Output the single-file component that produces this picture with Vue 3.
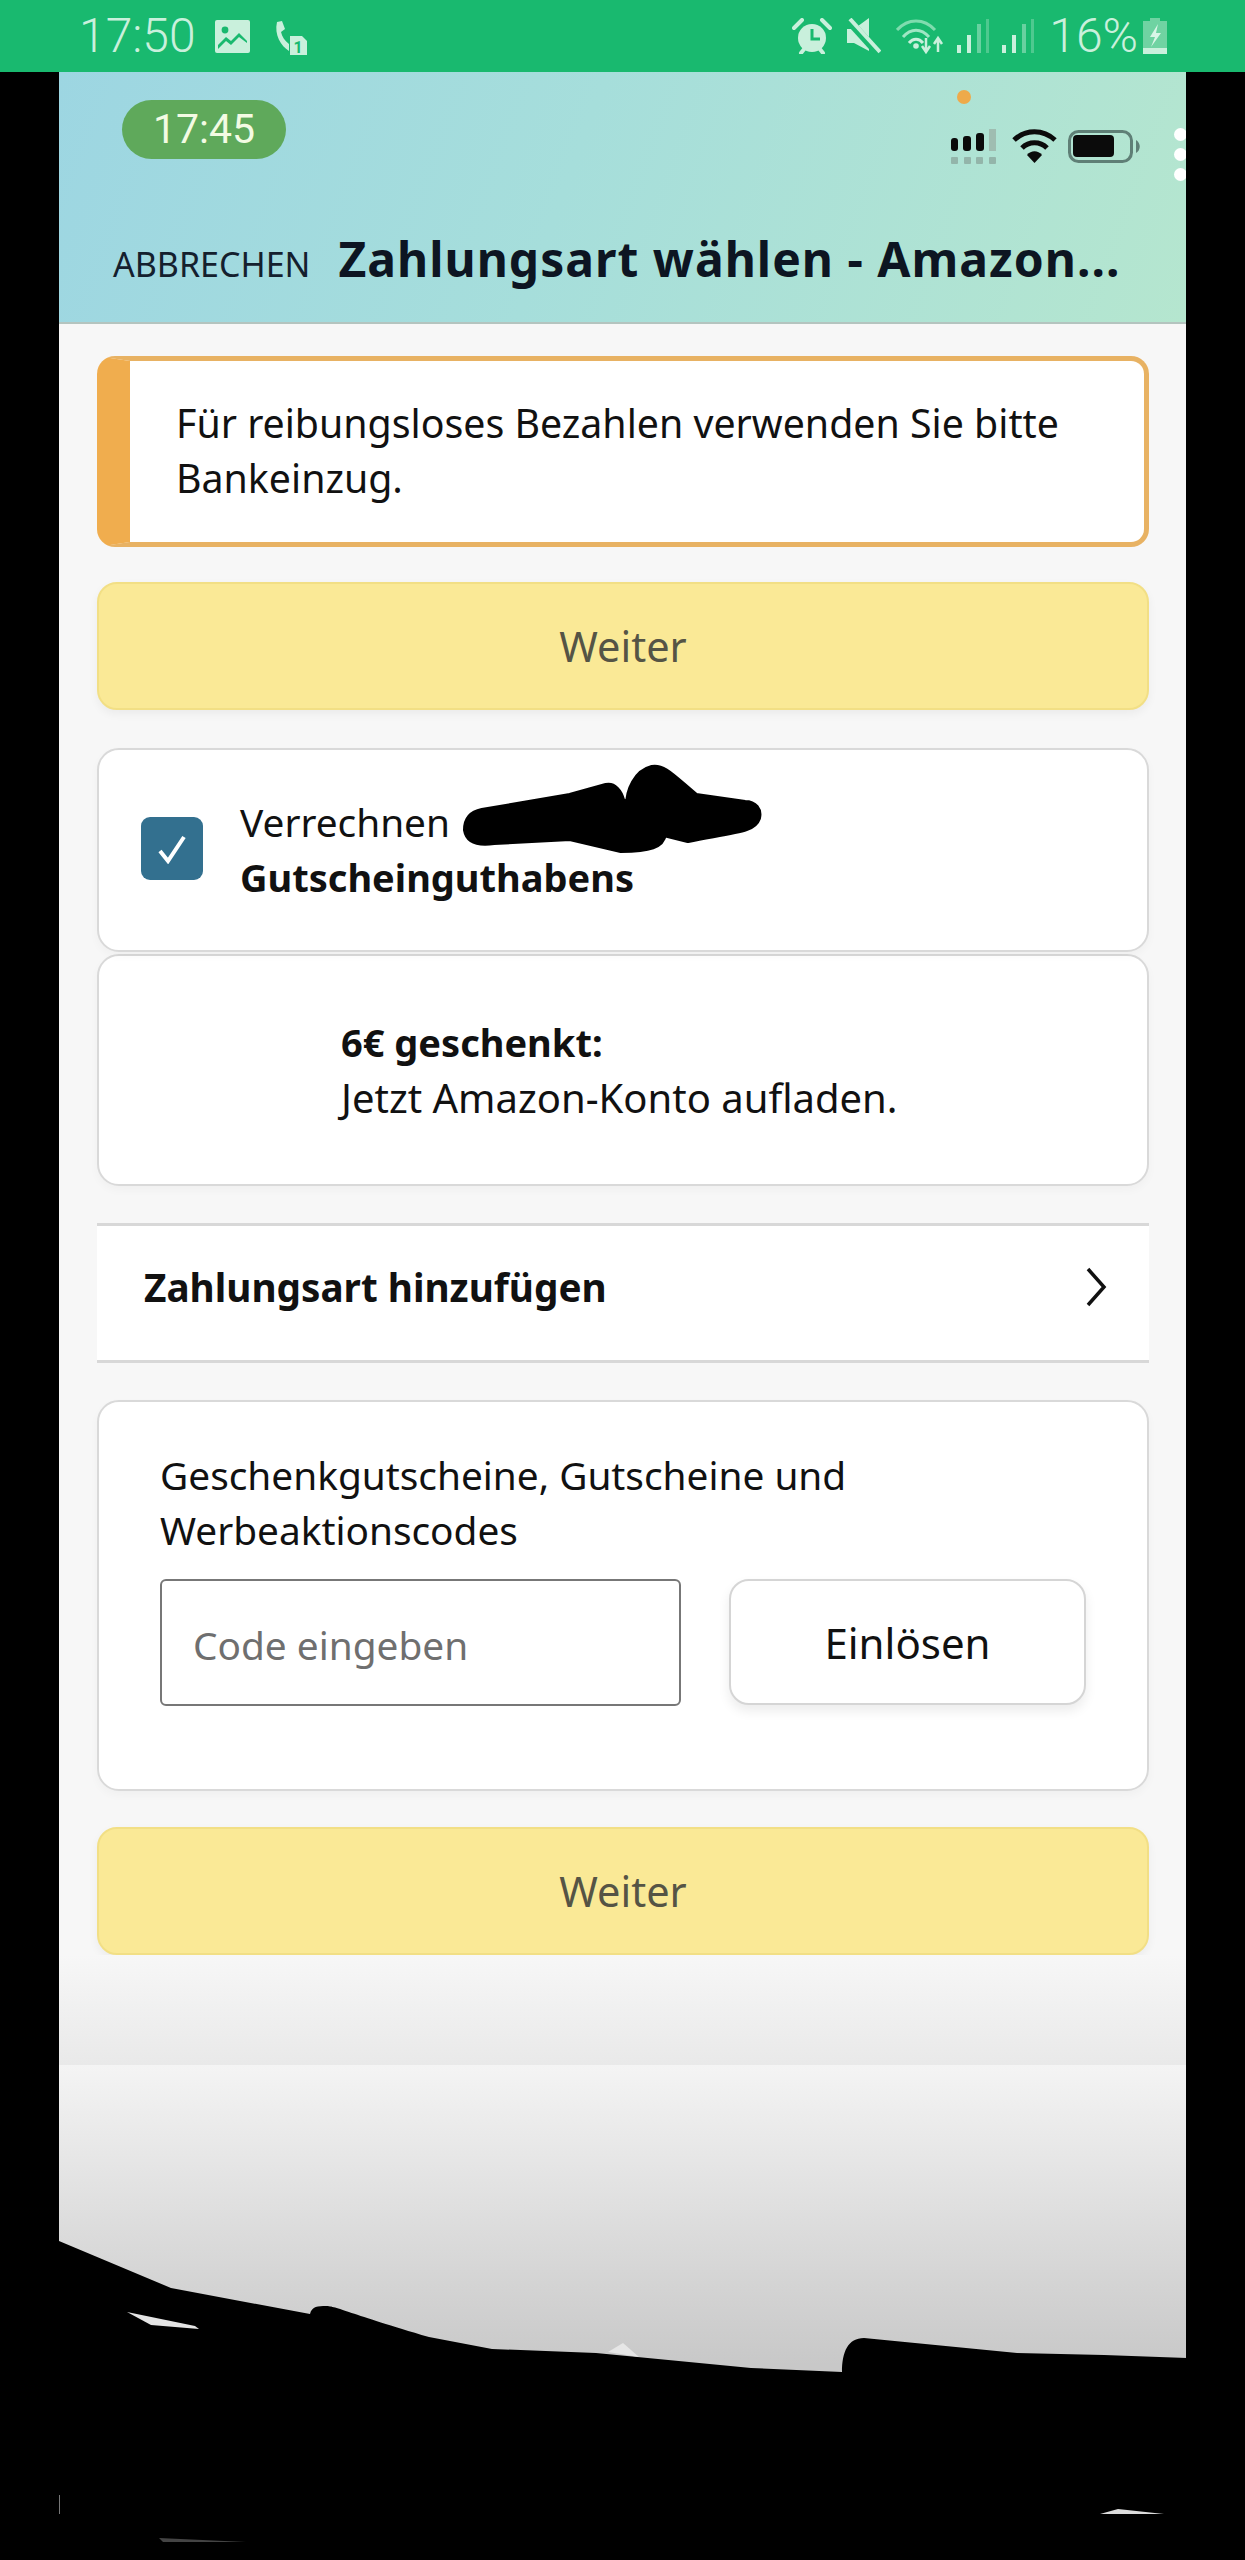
<script setup>
const signalBars = [
  { x: 0, y: 26, h: 8, o: 1 },
  { x: 10, y: 16, h: 18, o: 1 },
  { x: 20, y: 5, h: 29, o: 0.45 },
  { x: 29, y: 0, h: 34, o: 0.3 }
]
</script>

<template>
  <div class="screen">
    <!-- android status bar -->
    <div class="statusbar">
      <div class="statusbar-left">
        <span class="clock">17:50</span>
        <svg class="ic-image" width="35" height="33" viewBox="0 0 35 33">
          <rect width="35" height="33" rx="2" fill="#c9f0dc" />
          <circle cx="10" cy="10" r="3.4" fill="#19b96f" />
          <path d="M3 25 L11 17 L16 21 L24 13 L32 21 L32 23 L24 17 L16 25 L11 21 L3 29 Z" fill="#19b96f" />
        </svg>
        <svg class="ic-call" width="36" height="38" viewBox="0 0 36 38">
          <path d="M5 1 L10 0 L13 8 L9 11 C10 16 13 20 17 23 L17 30 C9 25 2 14 5 1 Z" fill="#c9f0dc" />
          <path d="M18 15 L30 15 L35 20 L35 34 L18 34 Z" fill="#c9f0dc" />
          <text x="26" y="32" class="sim-no">1</text>
        </svg>
      </div>
      <div class="statusbar-right">
        <svg width="40" height="36" viewBox="0 0 40 36">
          <circle cx="20" cy="20" r="14" fill="#c9f0dc" />
          <path d="M20 11 V21 H28" fill="none" stroke="#19b96f" stroke-width="3" />
          <path d="M2 10 L10 2 M38 10 L30 2" stroke="#c9f0dc" stroke-width="4" stroke-linecap="round" />
          <path d="M9 35 L13 30 M31 35 L27 30" stroke="#c9f0dc" stroke-width="4" stroke-linecap="round" />
        </svg>
        <svg class="ic-mute" width="34" height="36" viewBox="0 0 34 36">
          <path d="M0 11 H7 L22 0 V33 L7 25 H0 Z" fill="#c9f0dc" />
          <path d="M1 2 L31 35" stroke="#19b96f" stroke-width="8" />
          <path d="M3 1 L33 34" stroke="#c9f0dc" stroke-width="4" />
        </svg>
        <svg class="ic-wifi" width="48" height="36" viewBox="0 0 48 36">
          <path d="M1 12 C12 0 28 0 39 12" fill="none" stroke="#7fdcae" stroke-width="3" />
          <path d="M7 19 C15 10 25 10 33 19" fill="none" stroke="#9fe6c3" stroke-width="3" />
          <path d="M13 25 C17 20 23 20 27 25" fill="none" stroke="#c9f0dc" stroke-width="3" />
          <circle cx="20" cy="28" r="2.8" fill="#c9f0dc" />
          <path d="M30 20 V33 M26 28 L30 34 L34 28" fill="none" stroke="#c9f0dc" stroke-width="2.5" />
          <path d="M42 34 V22 M38 26 L42 20 L46 26" fill="none" stroke="#c9f0dc" stroke-width="2.5" />
        </svg>
        <svg v-for="n in 2" :key="n" class="ic-signal" width="32" height="34" viewBox="0 0 32 34">
          <rect v-for="b in signalBars" :key="b.x" :x="b.x" :y="b.y" width="4" :height="b.h" fill="#c9f0dc" :opacity="b.o" />
        </svg>
        <span class="percent">16%</span>
        <svg class="ic-batt" width="24" height="36" viewBox="0 0 24 36">
          <path d="M7 0 H17 V3 H24 V36 H0 V3 H7 Z" fill="#6fd3a2" />
          <rect y="30" width="24" height="6" fill="#c9f0dc" />
          <path d="M15 6 L7 19 H12 L8 29 L18 15 H13 Z" fill="#d9f6e7" />
        </svg>
      </div>
    </div>

    <div class="frame">
      <header class="head">
        <div class="head-top">
          <span class="pill">17:45</span>
          <div class="ios-status">
            <span class="cam-dot"></span>
            <svg width="192" height="36" viewBox="0 0 192 36">
              <rect x="0" y="9" width="7" height="13" rx="3" fill="#0b0b0b" />
              <rect x="12" y="7" width="8" height="15" rx="3" fill="#0b0b0b" />
              <rect x="25" y="4" width="8" height="18" rx="3" fill="#0b0b0b" />
              <rect x="38" y="0" width="7" height="22" fill="#9fbdb1" />
              <rect x="0" y="28" width="7" height="7" rx="1" fill="#93b5aa" />
              <rect x="13" y="28" width="7" height="7" rx="1" fill="#93b5aa" />
              <rect x="25" y="28" width="7" height="7" rx="1" fill="#93b5aa" />
              <rect x="38" y="28" width="7" height="7" rx="1" fill="#93b5aa" />
              <path d="M63 11 C75 0 92 0 104 11" fill="none" stroke="#0b0b0b" stroke-width="5" />
              <path d="M71 19 C78 12 89 12 96 19" fill="none" stroke="#0b0b0b" stroke-width="5" />
              <path d="M76 26 C80 21 87 21 91 26 L83.5 34 Z" fill="#0b0b0b" />
              <rect x="118.5" y="2.5" width="62" height="30" rx="9" fill="none" stroke="#5f7f76" stroke-width="3" />
              <rect x="122" y="6" width="41" height="22" rx="4" fill="#0b0b0b" />
              <path d="M185 11 C190 14 190 21 185 24 Z" fill="#5f7f76" />
            </svg>
          </div>
          <div class="menu-dots"><i></i><i></i><i></i></div>
        </div>
        <div class="head-title">
          <span class="cancel">ABBRECHEN</span>
          <span class="title">Zahlungsart wählen - Amazon...</span>
        </div>
      </header>

      <main class="content">
        <div class="alert">Für reibungsloses Bezahlen verwenden Sie bitte Bankeinzug.</div>

        <button class="btn-next">Weiter</button>

        <div class="card card-balance">
          <span class="check">
            <svg width="30" height="30" viewBox="0 0 30 30">
              <path d="M3 17 L11 27 L27 3" fill="none" stroke="#fff" stroke-width="4" />
            </svg>
          </span>
          <div>
            <div>Verrechnen</div>
            <div class="strong">Gutscheinguthabens</div>
          </div>
          <!-- geschwaerzt -->
          <svg class="scribble" viewBox="97 748 1052 204">
            <path d="M466 830 C466 818 472 813 482 811 L570 796 L606 786 C614 784 620 792 622 800 L628 806 C628 790 636 772 652 768 C664 766 672 776 696 796 L745 803 C755 803 760 810 758 818 C754 830 740 830 688 840 L664 834 C662 846 650 850 621 850 L570 838 L494 842 C480 844 468 842 466 830 Z" fill="#000" stroke="#000" stroke-width="6" stroke-linejoin="round" />
          </svg>
        </div>

        <div class="card card-promo">
          <div class="strong">6€ geschenkt:</div>
          <div class="promo-text">Jetzt Amazon-Konto aufladen.</div>
        </div>

        <div class="add-row">
          <span class="strong">Zahlungsart hinzufügen</span>
          <svg width="22" height="40" viewBox="0 0 22 40">
            <path d="M3 2 L19 20 L3 38" fill="none" stroke="#111" stroke-width="3.5" />
          </svg>
        </div>

        <div class="card card-code">
          <div>Geschenkgutscheine, Gutscheine und Werbeaktionscodes</div>
          <div class="code-form">
            <input class="code-input" placeholder="Code eingeben" />
            <button class="btn-redeem">Einlösen</button>
          </div>
        </div>

        <button class="btn-next btn-last">Weiter</button>
      </main>

      <div class="fade"></div>
      <div class="tail"></div>
    </div>

    <!-- schwarz uebermalter unterer Rand -->
    <svg class="mask" viewBox="0 2200 1245 360">
      <path d="M59 2241 L171 2288 L310 2314 C312 2306 318 2306 326 2306 C336 2306 350 2314 429 2337 L492 2349 L596 2353 L751 2368 L842 2372 C842 2352 848 2338 864 2338 L1017 2353 L1104 2355 L1187 2358 L1187 2560 L59 2560 Z" fill="#000" />
      <path d="M608 2352 L623 2343 L639 2357 Z" fill="#e6e6e6" />
      <path d="M127 2312 L151 2325 L199 2329 L195 2326 Z" fill="#e4e4e4" />
      <path d="M1100 2514 L1118 2509 L1164 2514 Z" fill="#dcdcdc" />
      <path d="M159 2538 L163 2542 L246 2542 Z" fill="#444" />
      <rect x="59" y="2495" width="1" height="19" fill="#777" />
    </svg>
  </div>
</template>

<style scoped>
* {
  box-sizing: border-box;
}
.screen {
  position: relative;
  width: 1245px;
  height: 2560px;
  overflow: hidden;
  display: flex;
  flex-direction: column;
  background: #000;
  color: #111;
  font-family: "Noto Sans", "Liberation Sans", sans-serif;
  font-size: 38.8px;
  line-height: 55px;
}
.statusbar {
  height: 72px;
  flex: none;
  display: flex;
  align-items: center;
  justify-content: space-between;
  padding: 0 78px 0 79px;
  background: #19b96f;
  color: #c9f0dc;
  font-family: Roboto, sans-serif;
  font-weight: 300;
}
.statusbar-left,
.statusbar-right {
  display: flex;
  align-items: center;
}
.clock {
  flex: none;
  font-size: 48px;
  line-height: 72px;
  white-space: nowrap;
}
.ic-image { margin-left: 19px; }
.ic-call { margin-left: 22px; margin-top: 8px; }
.sim-no {
  font-size: 16px;
  font-weight: 700;
  fill: #19b96f;
  text-anchor: middle;
}
.statusbar-right { gap: 13px; }
.ic-mute { margin: 0 2px; }
.percent {
  margin: 0 -8px 0 2px;
  font-size: 48px;
  line-height: 72px;
}

.frame {
  flex: 1;
  margin: 0 59px;
  display: flex;
  flex-direction: column;
  overflow: hidden;
  background: #f7f7f7;
}
.head {
  height: 252px;
  flex: none;
  display: flex;
  flex-direction: column;
  justify-content: space-between;
  background: linear-gradient(110deg, #9dd6e2 0%, #a6dedb 45%, #b5e6cf 100%);
  border-bottom: 2px solid #b4c4bf;
}
.head-top {
  position: relative;
  display: flex;
  justify-content: space-between;
  padding: 28px 43px 0 63px;
}
.pill {
  width: 164px;
  height: 59px;
  border-radius: 30px;
  background: #5fa95b;
  color: #f3fbe3;
  font-family: Roboto, sans-serif;
  font-size: 41px;
  line-height: 59px;
  text-align: center;
}
.ios-status {
  position: relative;
  height: 36px;
  margin-top: 23px;
}
.cam-dot {
  position: absolute;
  left: 6px;
  top: -33px;
  width: 14px;
  height: 14px;
  border-radius: 50%;
  background: #eeaa4a;
}
.menu-dots {
  position: absolute;
  top: 56px;
  right: -1px;
  display: flex;
  flex-direction: column;
  gap: 7px;
}
.menu-dots i {
  width: 13px;
  height: 13px;
  border-radius: 50%;
  background: #fff;
}
.head-title {
  display: flex;
  align-items: baseline;
  gap: 28px;
  padding: 0 0 30px 54px;
}
.cancel {
  font-size: 34px;
  color: #14202e;
}
.title {
  font-size: 48px;
  font-weight: 700;
  letter-spacing: 1px;
  color: #0d1522;
  white-space: nowrap;
}

.content {
  display: flex;
  flex-direction: column;
  padding: 32px 37px 0 38px;
}
.alert {
  padding: 35px 60px 36px 46px;
  background: #fff;
  border: 5px solid #e8b263;
  border-left: 33px solid #f0ad4e;
  border-radius: 18px;
  font-size: 39.3px;
}
.btn-next {
  height: 128px;
  margin-top: 35px;
  background: #fae996;
  border: 2px solid #f2df85;
  border-radius: 20px;
  box-shadow: 0 4px 10px rgba(0, 0, 0, 0.05);
  color: #555445;
  font: inherit;
  font-size: 41.5px;
}
.btn-last { margin-top: 36px; }
.card {
  background: #fff;
  border: 2px solid #d9d9d9;
  border-radius: 22px;
  box-shadow: 0 4px 10px rgba(0, 0, 0, 0.03);
}
.strong { font-weight: 700; font-size: 38px; }
.add-row .strong { font-size: 38.7px; }
.promo-text { font-size: 40px; }
.card-balance {
  position: relative;
  height: 204px;
  margin-top: 38px;
  display: flex;
  align-items: center;
  gap: 37px;
  padding-left: 42px;
}
.check {
  width: 62px;
  height: 63px;
  margin-bottom: 3px;
  display: flex;
  align-items: center;
  justify-content: center;
  background: #33708f;
  border-radius: 9px;
}
.scribble {
  position: absolute;
  top: -2px;
  left: -2px;
  width: 1052px;
  height: 204px;
}
.card-promo {
  height: 232px;
  margin-top: 2px;
  display: flex;
  flex-direction: column;
  justify-content: center;
  padding-left: 242px;
}
.add-row {
  height: 140px;
  margin-top: 37px;
  display: flex;
  align-items: center;
  justify-content: space-between;
  padding: 0 42px 12px 47px;
  background: #fff;
  border-top: 3px solid #d8d8d8;
  border-bottom: 3px solid #d8d8d8;
}
.card-code {
  height: 391px;
  margin-top: 37px;
  padding: 46px 36px 0 61px;
}
.code-form {
  display: flex;
  gap: 48px;
  margin-top: 21px;
}
.code-input {
  width: 521px;
  height: 127px;
  padding: 4px 31px 0;
  background: #fff;
  border: 2px solid #777;
  border-radius: 6px;
  color: #111;
  font: inherit;
}
.code-input::placeholder { color: #6f6f6f; }
.btn-redeem {
  width: 357px;
  height: 126px;
  background: #fff;
  border: 2px solid #d5d5d5;
  border-radius: 20px;
  box-shadow: 0 6px 12px rgba(0, 0, 0, 0.08);
  color: #111;
  font: inherit;
  font-size: 42px;
}
.fade {
  height: 110px;
  flex: none;
  background: linear-gradient(#f7f7f7, #e9e9e9);
}
.tail {
  flex: 1;
  background: linear-gradient(#f4f4f4 0, #c8c8c8 300px);
}
.mask {
  position: absolute;
  left: 0;
  bottom: 0;
  width: 1245px;
  height: 360px;
}
</style>

<style>
html, body {
  margin: 0;
  background: #000;
}
</style>
